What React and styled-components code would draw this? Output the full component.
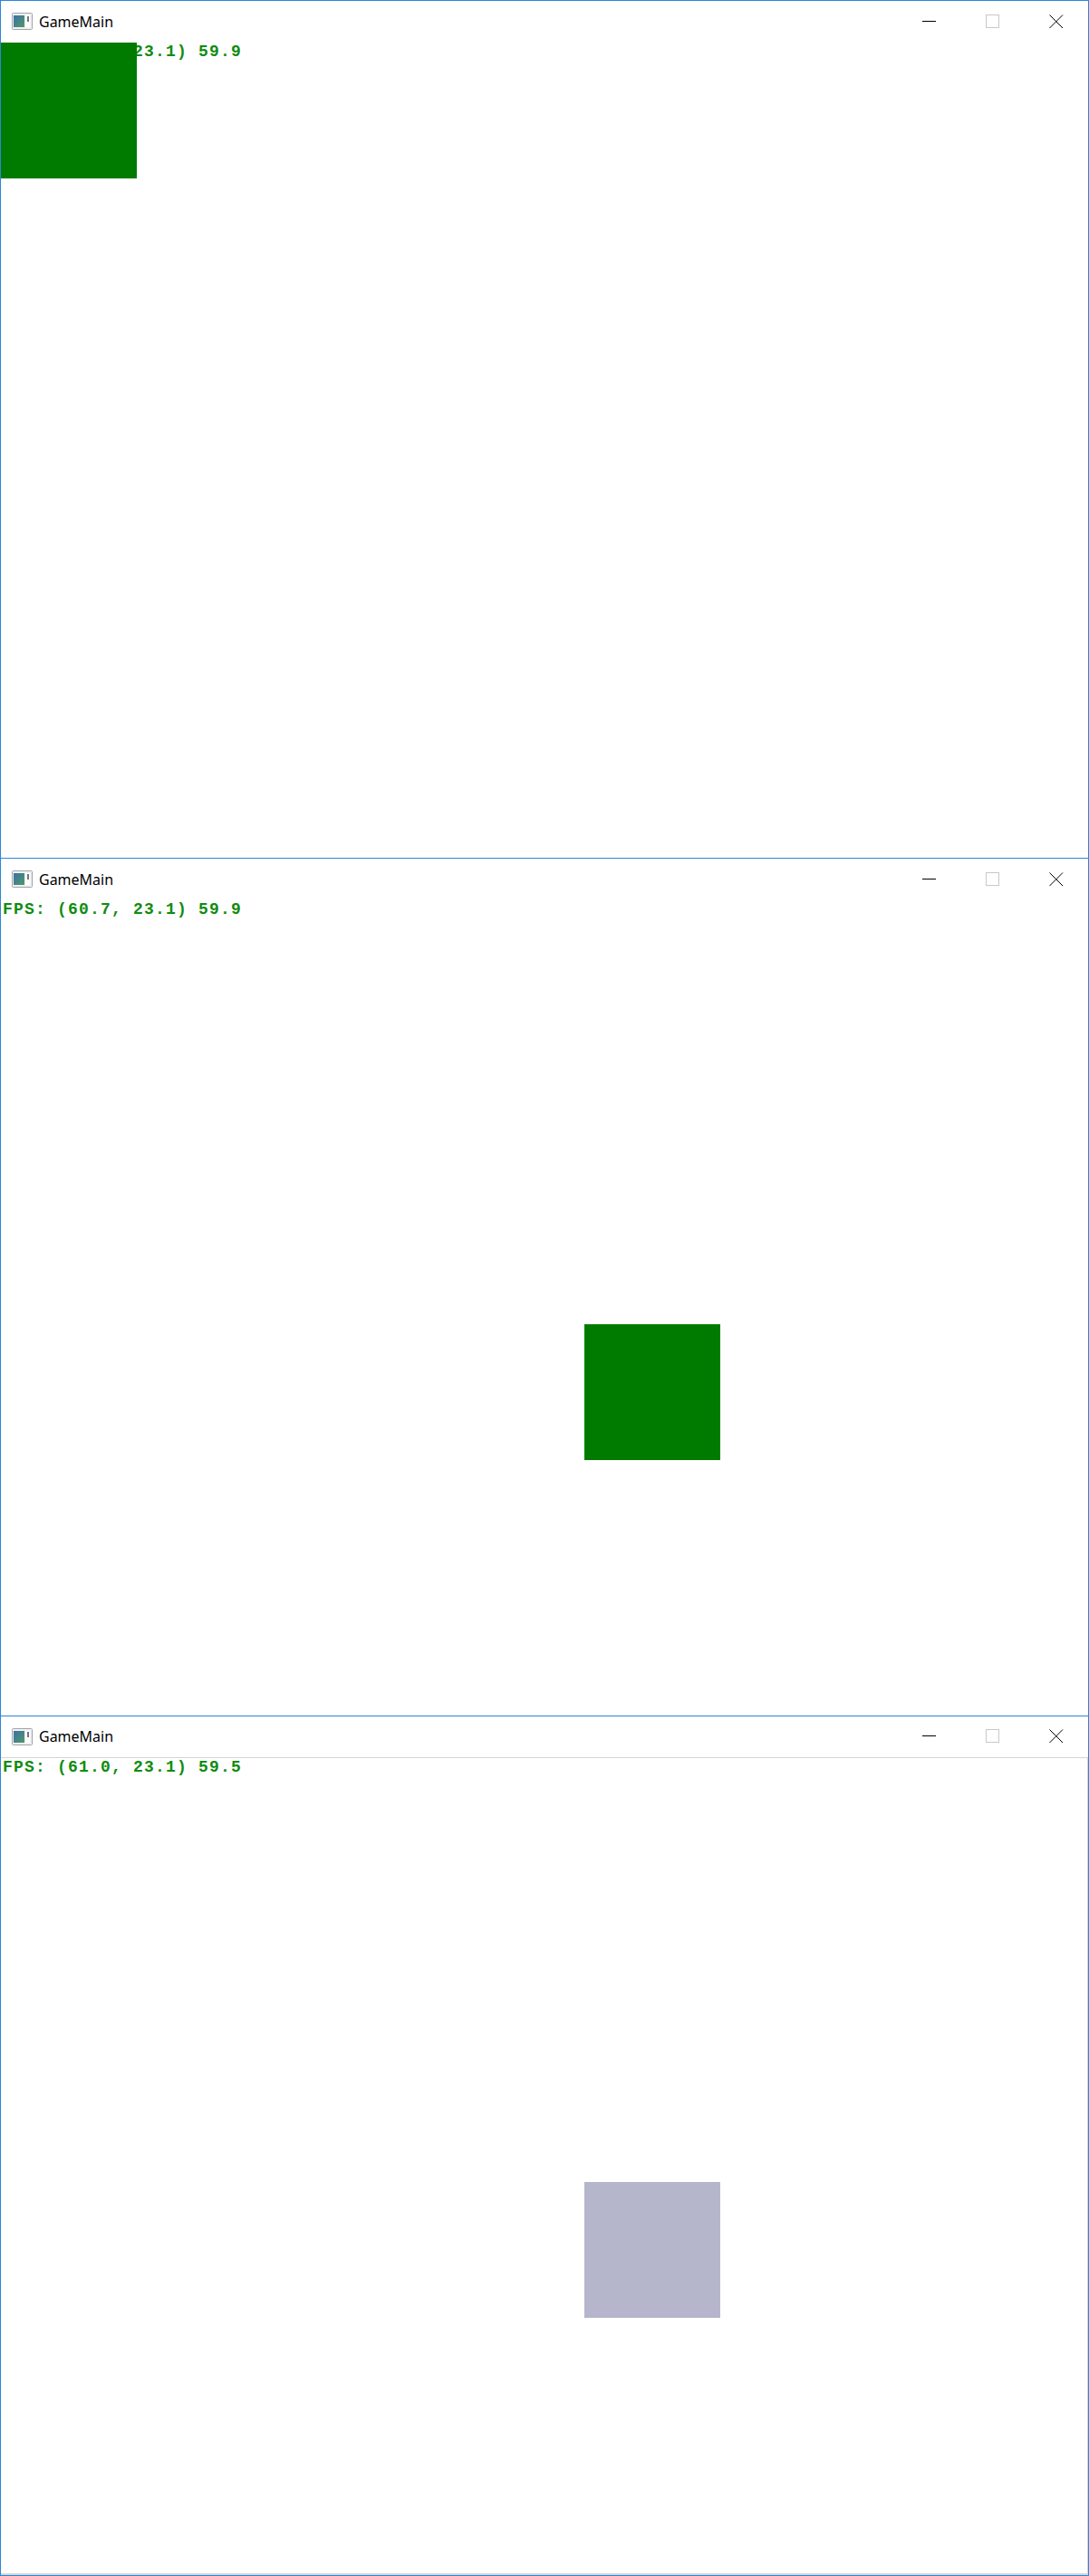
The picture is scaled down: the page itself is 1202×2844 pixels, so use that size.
import React from 'react'
import styled, { createGlobalStyle } from 'styled-components'

const GlobalStyle = createGlobalStyle`
    html, body {
        margin: 0;
        padding: 0;
        background: #ffffff;
    }
    body {
        font-family: "Noto Sans", "Liberation Sans", sans-serif;
    }
`

const frames = [
    { fps: 'FPS: (60.5, 23.1) 59.9', square: { x: 0, y: 0, color: '#007b00' }, height: 947, divider: false, bottom: false },
    { fps: 'FPS: (60.7, 23.1) 59.9', square: { x: 644, y: 468, color: '#007b00' }, height: 947, divider: false, bottom: false },
    { fps: 'FPS: (61.0, 23.1) 59.5', square: { x: 644, y: 468, color: '#b5b6cb' }, height: 950, divider: true, bottom: true },
]

function AppIcon() {
    return (
        <svg width="23" height="19" viewBox="0 0 23 19">
            <defs>
                <linearGradient id="iconGrad" x1="0" y1="0" x2="1" y2="1">
                    <stop offset="0" stopColor="#3d6fa8" />
                    <stop offset="1" stopColor="#4f9a68" />
                </linearGradient>
            </defs>
            <rect x="0.5" y="0.5" width="22" height="18" rx="1" fill="#f2f2f2" stroke="#9ea4ab" />
            <rect x="2" y="3" width="12" height="13" fill="url(#iconGrad)" />
            <rect x="15" y="3" width="5" height="13" fill="#ffffff" />
            <rect x="17" y="4" width="2" height="6" fill="#6f7780" />
        </svg>
    )
}

function WindowButtons() {
    return (
        <Buttons>
            <CaptionButton>
                <svg width="16" height="16" viewBox="0 0 16 16">
                    <line x1="0" y1="7.5" x2="15" y2="7.5" stroke="#000" strokeWidth="1" />
                </svg>
            </CaptionButton>
            <CaptionButton>
                <svg width="16" height="16" viewBox="0 0 16 16">
                    <rect x="0.5" y="0.5" width="14" height="14" fill="none" stroke="#c8c8c8" strokeWidth="1" />
                </svg>
            </CaptionButton>
            <CaptionButton>
                <svg width="16" height="16" viewBox="0 0 16 16">
                    <path d="M0.5 0.5 L15 15 M15 0.5 L0.5 15" stroke="#000" strokeWidth="1" />
                </svg>
            </CaptionButton>
        </Buttons>
    )
}

function GameWindow({ frame }) {
    return (
        <Frame $height={frame.height} $bottom={frame.bottom}>
            <TitleBar $divider={frame.divider}>
                <TitleLeft>
                    <AppIcon />
                    <Title>GameMain</Title>
                </TitleLeft>
                <WindowButtons />
            </TitleBar>
            <Client $inner={frame.bottom}>
                <FpsText>{frame.fps}</FpsText>
                <Square
                    $color={frame.square.color}
                    style={{ left: frame.square.x, top: frame.square.y }}
                />
            </Client>
        </Frame>
    )
}

function App() {
    return (
        <Page>
            <GlobalStyle />
            {frames.map((frame, index) => (
                <GameWindow key={index} frame={frame} />
            ))}
        </Page>
    )
}

export default App

const Page = styled.div`
    width: 1202px;
    display: flex;
    flex-direction: column;
`

const Frame = styled.div`
    box-sizing: border-box;
    height: ${props => props.$height}px;
    border: 1px solid #2b87d6;
    border-bottom: ${props => props.$bottom ? '1px solid #2b87d6' : 'none'};
    display: flex;
    flex-direction: column;
    background: #ffffff;
`

const TitleBar = styled.div`
    box-sizing: border-box;
    height: 46px;
    flex-shrink: 0;
    display: flex;
    align-items: center;
    justify-content: space-between;
    padding-left: 12px;
    border-bottom: ${props => props.$divider ? '1px solid #d4d4d4' : 'none'};
`

const TitleLeft = styled.div`
    display: flex;
    align-items: center;
    gap: 7px;
    margin-top: -1px;
`

const Title = styled.span`
    font-family: "Noto Sans", "Liberation Sans", sans-serif;
    font-size: 16px;
    color: #000000;
`

const Buttons = styled.div`
    display: flex;
    height: 100%;
`

const CaptionButton = styled.div`
    width: 70px;
    display: flex;
    align-items: center;
    justify-content: center;
    margin-top: -1px;
`

const Client = styled.div`
    position: relative;
    flex: 1;
    overflow: hidden;
    background: #ffffff;
    border-right: ${props => props.$inner ? '1px solid #d6d6d6' : 'none'};
    border-bottom: ${props => props.$inner ? '2px solid #d6d6d6' : 'none'};
`

const FpsText = styled.div`
    position: absolute;
    left: 2px;
    top: 1px;
    font-family: "Liberation Mono", "Courier New", monospace;
    font-weight: bold;
    font-size: 18px;
    line-height: 18px;
    letter-spacing: 1.2px;
    color: #108c10;
    white-space: pre;
`

const Square = styled.div`
    position: absolute;
    width: 150px;
    height: 150px;
    background: ${props => props.$color};
`
